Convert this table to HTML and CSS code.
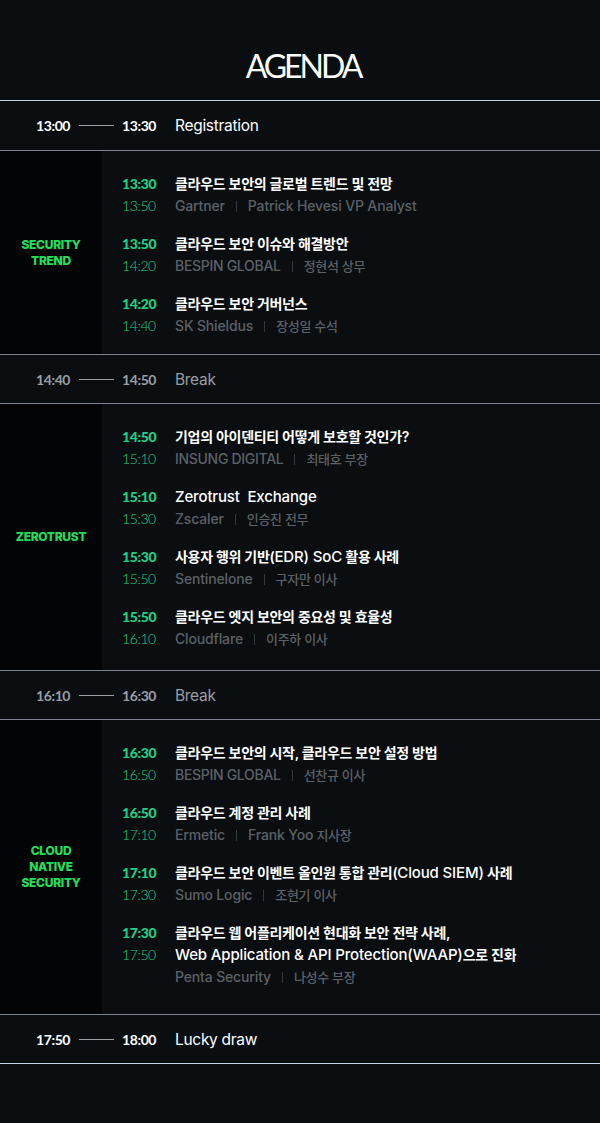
FILE: index.html
```html
<!DOCTYPE html>
<html lang="ko">
<head>
<meta charset="utf-8">
<link rel="stylesheet" href="styles.css">
</head>
<body>
<div class="page">
  <header class="head"><h1 class="title">AGENDA</h1></header>
  <div class="agenda">
    <div class="row first">
      <span class="t">13:00</span><span class="dash"></span><span class="t">13:30</span><span class="lbl">Registration</span>
    </div>
    <div class="section s1">
      <div class="cat">SECURITY<br>TREND</div>
      <div class="items">
        <div class="item"><div class="times"><b>13:30</b><span>13:50</span></div><div class="body"><div class="ttl">클라우드 보안의 글로벌 트렌드 및 전망</div><div class="sub"><span class="en">Gartner</span><i class="sep"></i><span class="en">Patrick Hevesi VP Analyst</span></div></div></div>
        <div class="item"><div class="times"><b>13:50</b><span>14:20</span></div><div class="body"><div class="ttl">클라우드 보안 이슈와 해결방안</div><div class="sub"><span class="en caps">BESPIN GLOBAL</span><i class="sep"></i>정현석 상무</div></div></div>
        <div class="item"><div class="times"><b>14:20</b><span>14:40</span></div><div class="body"><div class="ttl">클라우드 보안 거버넌스</div><div class="sub"><span class="en">SK Shieldus</span><i class="sep"></i>장성일 수석</div></div></div>
      </div>
    </div>
    <div class="row brk">
      <span class="t">14:40</span><span class="dash"></span><span class="t">14:50</span><span class="lbl">Break</span>
    </div>
    <div class="section s2">
      <div class="cat">ZEROTRUST</div>
      <div class="items">
        <div class="item"><div class="times"><b>14:50</b><span>15:10</span></div><div class="body"><div class="ttl">기업의 아이덴티티 어떻게 보호할 것인가?</div><div class="sub"><span class="en caps">INSUNG DIGITAL</span><i class="sep"></i>최태호 부장</div></div></div>
        <div class="item"><div class="times"><b>15:10</b><span>15:30</span></div><div class="body"><div class="ttl"><span class="en">Zerotrust&nbsp; Exchange</span></div><div class="sub"><span class="en">Zscaler</span><i class="sep"></i>인승진 전무</div></div></div>
        <div class="item"><div class="times"><b>15:30</b><span>15:50</span></div><div class="body"><div class="ttl">사용자 행위 기반(<span class="en">EDR) SoC</span> 활용 사례</div><div class="sub"><span class="en">Sentinelone</span><i class="sep"></i>구자만 이사</div></div></div>
        <div class="item"><div class="times"><b>15:50</b><span>16:10</span></div><div class="body"><div class="ttl">클라우드 엣지 보안의 중요성 및 효율성</div><div class="sub"><span class="en">Cloudflare</span><i class="sep"></i>이주하 이사</div></div></div>
      </div>
    </div>
    <div class="row brk">
      <span class="t">16:10</span><span class="dash"></span><span class="t">16:30</span><span class="lbl">Break</span>
    </div>
    <div class="section s3">
      <div class="cat">CLOUD<br>NATIVE<br>SECURITY</div>
      <div class="items">
        <div class="item"><div class="times"><b>16:30</b><span>16:50</span></div><div class="body"><div class="ttl">클라우드 보안의 시작, 클라우드 보안 설정 방법</div><div class="sub"><span class="en caps">BESPIN GLOBAL</span><i class="sep"></i>선찬규 이사</div></div></div>
        <div class="item"><div class="times"><b>16:50</b><span>17:10</span></div><div class="body"><div class="ttl">클라우드 계정 관리 사례</div><div class="sub"><span class="en">Ermetic</span><i class="sep"></i><span class="en">Frank Yoo</span>&nbsp;지사장</div></div></div>
        <div class="item"><div class="times"><b>17:10</b><span>17:30</span></div><div class="body"><div class="ttl">클라우드 보안 이벤트 올인원 통합 관리(<span class="en">Cloud SIEM)</span> 사례</div><div class="sub"><span class="en">Sumo Logic</span><i class="sep"></i>조현기 이사</div></div></div>
        <div class="item"><div class="times"><b>17:30</b><span>17:50</span></div><div class="body"><div class="ttl">클라우드 웹 어플리케이션 현대화 보안 전략 사례,<br><span class="en">Web Application &amp; API Protection(WAAP)</span>으로 진화</div><div class="sub"><span class="en">Penta Security</span><i class="sep"></i>나성수 부장</div></div></div>
      </div>
    </div>
    <div class="row">
      <span class="t">17:50</span><span class="dash"></span><span class="t">18:00</span><span class="lbl">Lucky draw</span>
    </div>
  </div>
</div>
</body>
</html>
```

FILE: styles.css
```css
html, body {
  margin: 0;
  padding: 0;
  background: #0a0e11;
}
body {
  font-family: "Noto Sans CJK KR", "Noto Sans", sans-serif;
  color: #ffffff;
}
.page {
  width: 600px;
  min-height: 1123px;
  background: #0a0e11;
}
.head {
  height: 100px;
  display: flex;
  align-items: center;
  justify-content: center;
}
.title {
  margin: 30px 0 0 6px;
  font-family: "Lato", "Noto Sans", sans-serif;
  font-weight: 400;
  font-size: 32px;
  letter-spacing: -3px;
  color: #ffffff;
}
.agenda {
  border-top: 1px solid #c6d0e6;
  border-bottom: 1px solid #c6d0e6;
}
.row {
  height: 48px;
  display: flex;
  align-items: center;
  padding-left: 36px;
  border-bottom: 1px solid #7a8290;
  font-family: "Lato", "Noto Sans CJK KR", sans-serif;
}
.row.first { height: 49px; }
.row:last-child { border-bottom: none; }
.row .t {
  font-size: 14px;
  font-weight: 700;
  width: 34px;
  letter-spacing: -0.4px;
  color: #ffffff;
}
.row .dash {
  width: 35px;
  height: 1px;
  background: #9aa0a8;
  margin: 0 8px 0 9px;
}
.row .lbl {
  margin-left: 19px;
  font-family: "Inter", "Noto Sans CJK KR", sans-serif;
  font-size: 15.5px;
  letter-spacing: -0.3px;
  color: #ffffff;
}
.row.brk .t, .row.brk .lbl {
  color: #9a9ea3;
}
.section {
  display: grid;
  grid-template-columns: 102px 1fr;
  border-bottom: 1px solid #7a8290;
}
.cat {
  background: #030405;
  display: flex;
  align-items: center;
  justify-content: center;
  text-align: center;
  color: #22e05c;
  font-family: "Inter", "Noto Sans", sans-serif;
  font-weight: 800;
  font-size: 12px;
  line-height: 16px;
  letter-spacing: -0.3px;
}
.items {
  display: flex;
  flex-direction: column;
  gap: 16px;
  padding: 22px 0 17px 20px;
}
.s2 .items { padding-bottom: 20px; }
.s3 .items { padding-bottom: 26px; }
.item {
  display: grid;
  grid-template-columns: 53px 1fr;
  line-height: 22px;
}
.times {
  display: flex;
  flex-direction: column;
  font-family: "Lato", "Noto Sans", sans-serif;
  font-size: 14px;
  letter-spacing: -0.4px;
  color: #1fd187;
}
.times b { font-weight: 900; }
.times span { font-weight: 300; }
.ttl {
  font-family: "Inter", "Noto Sans CJK KR", sans-serif;
  font-size: 14px;
  font-weight: 600;
  letter-spacing: -0.3px;
  color: #ffffff;
}
.ttl .en {
  font-size: 15px;
  font-weight: 500;
  letter-spacing: -0.15px;
}
.sub {
  display: flex;
  align-items: center;
  font-family: "Inter", "Noto Sans CJK KR", sans-serif;
  font-size: 13px;
  font-weight: 500;
  letter-spacing: -0.3px;
  color: #5c6166;
}
.sub .en {
  font-size: 14px;
  letter-spacing: -0.15px;
}
.sub .en.caps {
  letter-spacing: -0.3px;
}
.sep {
  display: inline-block;
  width: 1px;
  height: 11px;
  background: #33383d;
  margin: 0 11px;
}
```
